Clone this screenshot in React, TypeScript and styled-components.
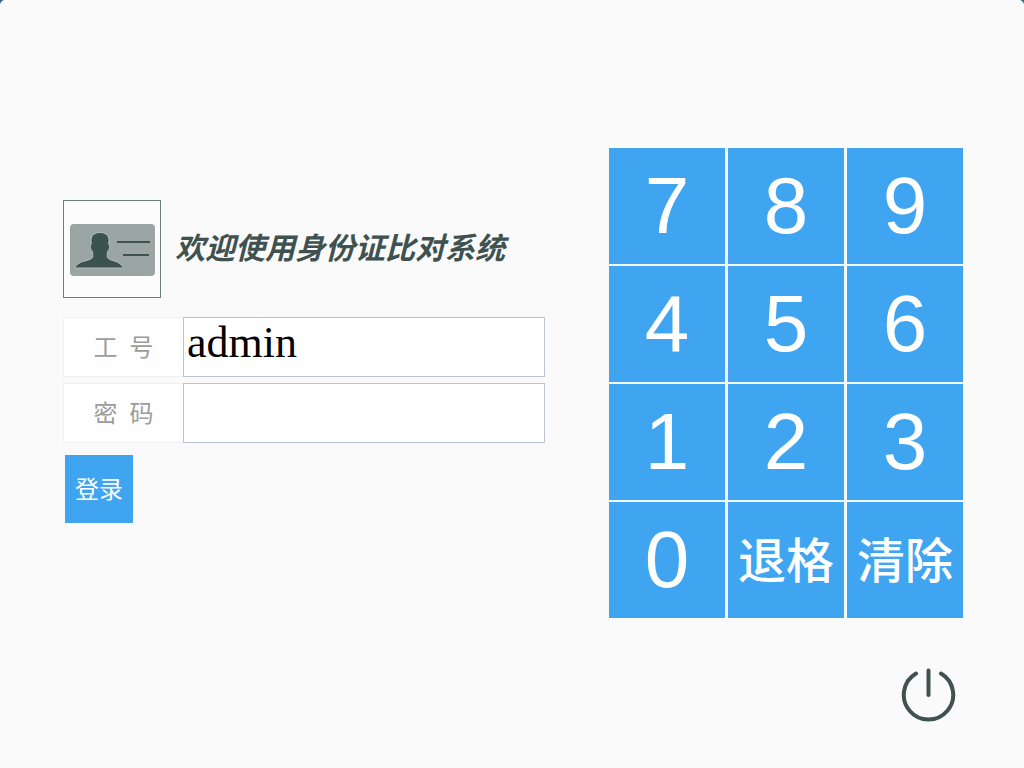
import React, { useState } from "react";
import styled, { createGlobalStyle } from "styled-components";

const GlobalStyle = createGlobalStyle`
  *, *::before, *::after { box-sizing: border-box; }
  body {
    margin: 0;
    background: #2f5f92;
    font-family: "Liberation Sans", "Noto Sans CJK SC", sans-serif;
  }
`;

const Page = styled.main`
  display: flex;
  align-items: flex-start;
  gap: 64px;
  min-height: 100vh;
  padding: 148px 61px 44px 63px;
  border-radius: 5px 5px 0 0;
  background: #fafafa;
`;

const LoginForm = styled.form`
  flex: 1;
  min-width: 0;
  padding-top: 52px;
`;

const Header = styled.header`
  display: flex;
  align-items: center;
  gap: 14px;
  margin-bottom: 19px;
`;

const Emblem = styled.div`
  flex: none;
  width: 98px;
  height: 98px;
  border: 1px solid #6b7d7a;
  background: #fcfcfc;

  svg { display: block; }
`;

const Title = styled.h1`
  margin: 0;
  color: #3f524f;
  font-size: 30px;
  font-style: italic;
  font-weight: 700;
  line-height: 40px;
  white-space: nowrap;
`;

const Field = styled.div`
  display: flex;
  height: 60px;
  margin-bottom: 6px;
`;

const FieldLabel = styled.label`
  display: flex;
  flex: none;
  align-items: center;
  justify-content: center;
  width: 120px;
  padding-bottom: 4px;
  border: 1px solid #f0f0f0;
  border-right: 0;
  background: #fefefe;
  color: #9c9c9c;
  font-size: 24px;
  white-space: pre;
`;

const FieldInput = styled.input`
  flex: 1;
  min-width: 0;
  padding: 0 3px 9px;
  border: 1px solid #b9c4d2;
  border-radius: 0;
  outline: none;
  background: #fff;
  color: #000;
  font-family: "Liberation Serif", "Noto Sans CJK SC", serif;
  font-size: 44px;
`;

const LoginButton = styled.button`
  display: block;
  width: 68px;
  height: 68px;
  margin: 12px 2px 0;
  padding: 0 0 4px;
  border: 0;
  background: #3fa5f0;
  color: #fff;
  font-family: inherit;
  font-size: 24px;
`;

const Side = styled.section`
  display: flex;
  flex: none;
  flex-direction: column;
  align-items: flex-end;
  gap: 48px;
`;

const Keypad = styled.div`
  display: grid;
  grid-template-columns: repeat(3, 116px);
  grid-auto-rows: 116px;
  gap: 2px 3px;
  background: #f3f9fe;
`;

const Key = styled.button<{ $word?: boolean }>`
  padding: ${({ $word }) => ($word ? "0 0 6px" : "0")};
  border: 0;
  background: #3fa5f0;
  color: #fff;
  font-family: inherit;
  font-size: ${({ $word }) => ($word ? 48 : 80)}px;
  font-weight: ${({ $word }) => ($word ? 500 : 400)};
  white-space: nowrap;
`;

const PowerButton = styled.button`
  display: block;
  margin-right: 7px;
  padding: 0;
  border: 0;
  background: none;
  color: #3f524f;

  svg { display: block; }
`;

const IdCardIcon = () => (
  <svg width="96" height="96" viewBox="0 0 96 96" aria-hidden="true">
    <rect x="6" y="23" width="85" height="52" rx="4" fill="#9ba6a4" />
    <path
      d="M36 31.500C30.500 31.500 27 34.500 27 39.500L27.300 43.500Q25.900 43.500 26.200 46Q26.800 49 28.500 50.500L28.700 53V56.500C27 58.500 23 59.500 18.700 60.500C15.500 61.500 12.500 63.500 10.500 67H59.500C57.500 63.500 54.500 61.500 52 60.500C48 59.500 45 58.500 43.300 56.500V53L43.500 50.500Q45.200 49 45.800 46Q46.100 43.500 44.700 43.500L45 39.500C45 34.500 41.500 31.500 36 31.500Z"
      fill="#3c524f"
      stroke="#b3bcba"
      strokeWidth="1"
    />
    <path d="M53 41H86M59 54H85" stroke="#3c524f" strokeWidth="2" />
  </svg>
);

const PowerIcon = () => (
  <svg width="56" height="56" viewBox="0 0 56 56" fill="none" stroke="currentColor" strokeWidth="4" strokeLinecap="round" aria-hidden="true">
    <path d="M16 7.500A24.700 24.700 0 1 0 41 7.500M28.500 4.500V29" />
  </svg>
);

const KEYS = ["7", "8", "9", "4", "5", "6", "1", "2", "3", "0", "退格", "清除"];

export default function App() {
  const [values, setValues] = useState({ account: "admin", password: "" });
  const [active, setActive] = useState<"account" | "password">("account");

  const press = (key: string) =>
    setValues((current) => {
      const text = current[active];
      const next = key === "清除" ? "" : key === "退格" ? text.slice(0, -1) : text + key;
      return { ...current, [active]: next };
    });

  return (
    <>
      <GlobalStyle />
      <Page>
        <LoginForm onSubmit={(event) => event.preventDefault()}>
          <Header>
            <Emblem>
              <IdCardIcon />
            </Emblem>
            <Title>欢迎使用身份证比对系统</Title>
          </Header>
          <Field>
            <FieldLabel htmlFor="account">{"工\u2002号"}</FieldLabel>
            <FieldInput
              id="account"
              type="text"
              value={values.account}
              onFocus={() => setActive("account")}
              onChange={(event) => setValues({ ...values, account: event.target.value })}
            />
          </Field>
          <Field>
            <FieldLabel htmlFor="password">{"密\u2002码"}</FieldLabel>
            <FieldInput
              id="password"
              type="password"
              value={values.password}
              onFocus={() => setActive("password")}
              onChange={(event) => setValues({ ...values, password: event.target.value })}
            />
          </Field>
          <LoginButton type="submit">登录</LoginButton>
        </LoginForm>
        <Side>
          <Keypad>
            {KEYS.map((key) => (
              <Key key={key} type="button" $word={key.length > 1} onClick={() => press(key)}>
                {key}
              </Key>
            ))}
          </Keypad>
          <PowerButton type="button" aria-label="关机">
            <PowerIcon />
          </PowerButton>
        </Side>
      </Page>
    </>
  );
}
